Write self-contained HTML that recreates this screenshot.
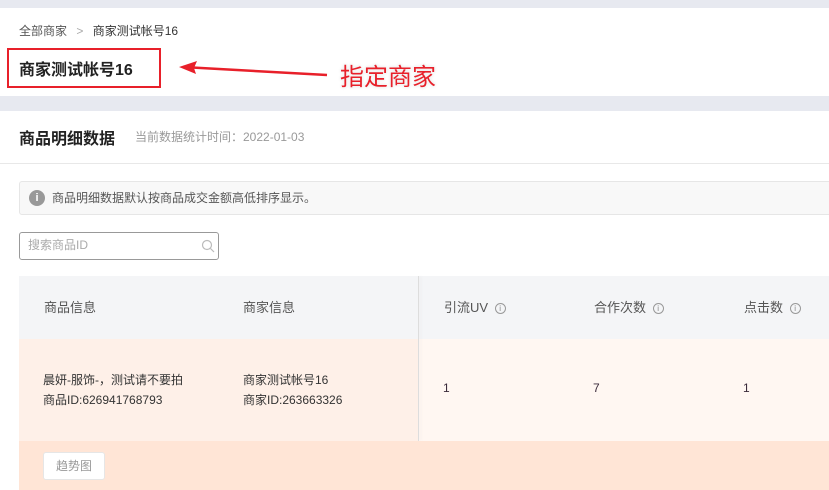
<!DOCTYPE html>
<html><head><meta charset="utf-8"><style>
*{margin:0;padding:0;box-sizing:border-box}
body{width:829px;height:490px;overflow:hidden;background:#fff;font-family:"Liberation Sans","Noto Sans CJK SC",sans-serif;color:#333;position:relative}
.a{position:absolute;white-space:nowrap}
.q{display:inline-block;width:11px;height:11px;border:1px solid #999;border-radius:50%;font-size:8px;line-height:9px;text-align:center;color:#888;margin-left:3px;vertical-align:1px}
</style></head><body>
<div class="a" style="left:0;top:0;width:829px;height:8px;background:#e7e9f0"></div>
<div class="a" style="left:0;top:96px;width:829px;height:15px;background:#e7e9f0"></div>
<div class="a" style="left:19px;top:22px;font-size:12px;color:#555">全部商家 <span style="color:#aaa;margin:0 6px">&gt;</span> <span style="color:#333">商家测试帐号16</span></div>
<div class="a" style="left:7px;top:48px;width:154px;height:40px;border:2px solid #e8202a"></div>
<div class="a" style="left:19px;top:56px;font-size:16px;font-weight:bold;color:#222">商家测试帐号16</div>
<svg class="a" style="left:175px;top:58px" width="160" height="25"><path d="M8 9 L152 17" stroke="#e8202a" stroke-width="2.5"/><path d="M4 9 L22 3 L19 10 L21 16 Z" fill="#e8202a"/></svg>
<div class="a" style="left:340px;top:57px;font-size:24px;color:#e8202a;text-shadow:0 0 3px #fff,0 0 3px #ccc">指定商家</div>
<div class="a" style="left:19px;top:125px;font-size:16px;font-weight:bold;color:#222">商品明细数据</div>
<div class="a" style="left:135px;top:128px;font-size:12px;color:#999">当前数据统计时间：2022-01-03</div>
<div class="a" style="left:0;top:163px;width:829px;height:1px;background:#e8e8e8"></div>
<div class="a" style="left:19px;top:181px;width:820px;height:34px;background:#f8f8f8;border:1px solid #e6e6e6;border-radius:3px"></div>
<div class="a" style="left:29px;top:190px;width:16px;height:16px;border-radius:50%;background:#999;color:#fff;font-size:11px;font-weight:bold;text-align:center;line-height:16px">i</div>
<div class="a" style="left:52px;top:189px;font-size:12px;color:#555">商品明细数据默认按商品成交金额高低排序显示。</div>
<div class="a" style="left:19px;top:232px;width:200px;height:28px;border:1px solid #999;border-radius:3px"></div>
<div class="a" style="left:28px;top:236px;font-size:12px;color:#aaa">搜索商品ID</div>
<svg class="a" style="left:201px;top:239px" width="14" height="14"><circle cx="6" cy="6" r="4.5" fill="none" stroke="#bbb" stroke-width="1.2"/><path d="M9.5 9.5 L13 13" stroke="#bbb" stroke-width="1.2"/></svg>
<div class="a" style="left:19px;top:276px;width:810px;height:63px;background:#f4f5f7"></div>
<div class="a" style="left:19px;top:339px;width:400px;height:102px;background:#fef0e8"></div>
<div class="a" style="left:419px;top:339px;width:410px;height:102px;background:#fff7f2"></div>
<div class="a" style="left:418px;top:276px;width:1px;height:165px;background:#ddd;box-shadow:2px 0 3px rgba(0,0,0,.06)"></div>
<div class="a" style="left:19px;top:441px;width:810px;height:49px;background:#ffe5d6"></div>
<div class="a" style="left:44px;top:297px;font-size:13px;color:#555">商品信息</div>
<div class="a" style="left:243px;top:297px;font-size:13px;color:#555">商家信息</div>
<div class="a" style="left:444px;top:297px;font-size:13px;color:#555">引流UV <span class="q">i</span></div>
<div class="a" style="left:594px;top:297px;font-size:13px;color:#555">合作次数 <span class="q">i</span></div>
<div class="a" style="left:744px;top:297px;font-size:13px;color:#555">点击数 <span class="q">i</span></div>
<div class="a" style="left:43px;top:370px;font-size:12px;line-height:20px;color:#333">晨妍-服饰-，测试请不要拍<br>商品ID:626941768793</div>
<div class="a" style="left:243px;top:370px;font-size:12px;line-height:20px;color:#333">商家测试帐号16<br>商家ID:263663326</div>
<div class="a" style="left:443px;top:381px;font-size:12px;color:#3a2a3a">1</div>
<div class="a" style="left:593px;top:381px;font-size:12px;color:#3a2a3a">7</div>
<div class="a" style="left:743px;top:381px;font-size:12px;color:#3a2a3a">1</div>
<div class="a" style="left:43px;top:452px;width:62px;height:28px;background:#fff;border:1px solid #e6e6e6;border-radius:3px;font-size:12px;color:#999;text-align:center;line-height:26px">趋势图</div>
</body></html>
